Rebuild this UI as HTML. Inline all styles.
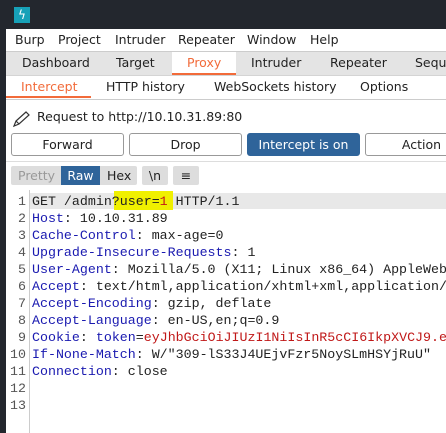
<!DOCTYPE html><html><head><style>
html,body{margin:0;width:446px;height:433px;overflow:hidden}
body{background:#23272e;font-family:"DejaVu Sans","Liberation Sans",sans-serif;font-size:12.5px;color:#222;position:relative}
.a{position:absolute}
.clip{position:absolute;left:0;top:0;width:446px;height:433px;overflow:hidden}
.win{position:absolute;left:6px;top:29px;right:0;bottom:0;background:#fff}
.menu{left:6px;top:29px;right:0;height:22px;background:#fff;border-bottom:1px solid #ccc;overflow:hidden}
.menu span,.tabs span,.sub span{position:absolute;white-space:nowrap}
.tabs{left:6px;top:52px;right:0;height:23px;background:#e4e4e4;border-bottom:1px solid #d4d4d4;overflow:hidden}
.sub{left:6px;top:76px;right:0;height:23px;background:#fff;border-bottom:1px solid #ccc;overflow:hidden}
.btn{position:absolute;top:133px;height:21px;border:1px solid #999;border-radius:3px;background:#fff;text-align:center;line-height:21px}
.ed{font-family:"Liberation Mono",monospace;font-size:13.3px;line-height:17px;white-space:pre}
.k{color:#1a1ab0}.r{color:#c01818}
</style></head><body><div class="clip">
<div class="a" style="left:14px;top:7px;width:16px;height:16px;background:#17a1b8;color:#fff;font-size:12px;line-height:16px;text-align:center">ϟ</div>
<div class="win"></div>
<div class="a menu"><span style="left:9px;top:3px">Burp</span><span style="left:52px;top:3px">Project</span><span style="left:109px;top:3px">Intruder</span><span style="left:172px;top:3px">Repeater</span><span style="left:241px;top:3px">Window</span><span style="left:304px;top:3px">Help</span></div>
<div class="a tabs"><div class="a" style="left:166px;top:0;width:64px;height:23px;background:#fff;border-bottom:2px solid #f26b3a;box-sizing:border-box"></div><span style="left:16px;top:3px">Dashboard</span><span style="left:110px;top:3px">Target</span><span style="left:181px;top:3px;color:#f26b3a">Proxy</span><span style="left:245px;top:3px">Intruder</span><span style="left:324px;top:3px">Repeater</span><span style="left:409px;top:3px">Sequ</span></div>
<div class="a sub"><div class="a" style="left:0;top:20px;width:85px;height:2px;background:#f26b3a"></div><span style="left:15px;top:3px;color:#f26b3a">Intercept</span><span style="left:100px;top:3px">HTTP history</span><span style="left:208px;top:3px">WebSockets history</span><span style="left:354px;top:3px">Options</span></div>
<svg class="a" style="left:12px;top:110px" width="20" height="18"><path d="M2 16 L4 11 L14 2 L17 5 L7 14 Z M4 11 L7 14" fill="none" stroke="#333" stroke-width="1.2"/></svg>
<div class="a" style="left:37px;top:109px">Request to http://10.10.31.89:80</div>
<div class="btn" style="left:11px;width:111px">Forward</div>
<div class="btn" style="left:129px;width:111px">Drop</div>
<div class="btn" style="left:247px;width:111px;background:#2f649a;border-color:#2f649a;color:#fff">Intercept is on</div>
<div class="a" style="left:365px;top:133px;width:81px;height:23px;overflow:hidden"><div class="btn" style="left:0;top:0;width:111px">Action</div></div>
<div class="a" style="left:6px;top:161px;right:0;height:1px;background:#ddd"></div>
<div class="a" style="left:11px;top:166px;width:126px;height:19px;background:#ddd;border-radius:2px"></div>
<div class="a" style="left:18px;top:168px;color:#999">Pretty</div>
<div class="a" style="left:61px;top:166px;width:39px;height:19px;background:#2f649a;color:#fff;text-align:center;line-height:19px">Raw</div>
<div class="a" style="left:107px;top:168px">Hex</div>
<div class="a" style="left:142px;top:166px;width:26px;height:19px;background:#ddd;border-radius:2px;text-align:center;line-height:19px">\n</div>
<div class="a" style="left:173px;top:166px;width:26px;height:19px;background:#ddd;border-radius:2px;text-align:center;line-height:19px">≡</div>
<div class="a" style="left:29px;top:190px;width:1px;height:243px;background:#ccc"></div>
<div class="a" style="left:30px;top:193px;right:0;height:16px;background:#e8e8e8"></div>
<div class="a" style="left:114px;top:191px;width:59px;height:19px;background:#f0f000"></div>
<div class="a ed" style="left:0;top:193px;width:26px;text-align:right;color:#555">1
2
3
4
5
6
7
8
9
10
11
12
13</div>
<div class="a ed" style="left:32px;top:193px;width:414px;overflow:hidden">GET /admin?user=<span class="r">1</span> HTTP/1.1
<span class="k">Host</span>: 10.10.31.89
<span class="k">Cache-Control</span>: max-age=0
<span class="k">Upgrade-Insecure-Requests</span>: 1
<span class="k">User-Agent</span>: Mozilla/5.0 (X11; Linux x86_64) AppleWebKit
<span class="k">Accept</span>: text/html,application/xhtml+xml,application/xml
<span class="k">Accept-Encoding</span>: gzip, deflate
<span class="k">Accept-Language</span>: en-US,en;q=0.9
<span class="k">Cookie</span>: <span class="k">token</span>=<span class="r">eyJhbGciOiJIUzI1NiIsInR5cCI6IkpXVCJ9.eyJ</span>
<span class="k">If-None-Match</span>: W/"309-lS33J4UEjvFzr5NoySLmHSYjRuU"
<span class="k">Connection</span>: close
</div>
</div></body></html>
